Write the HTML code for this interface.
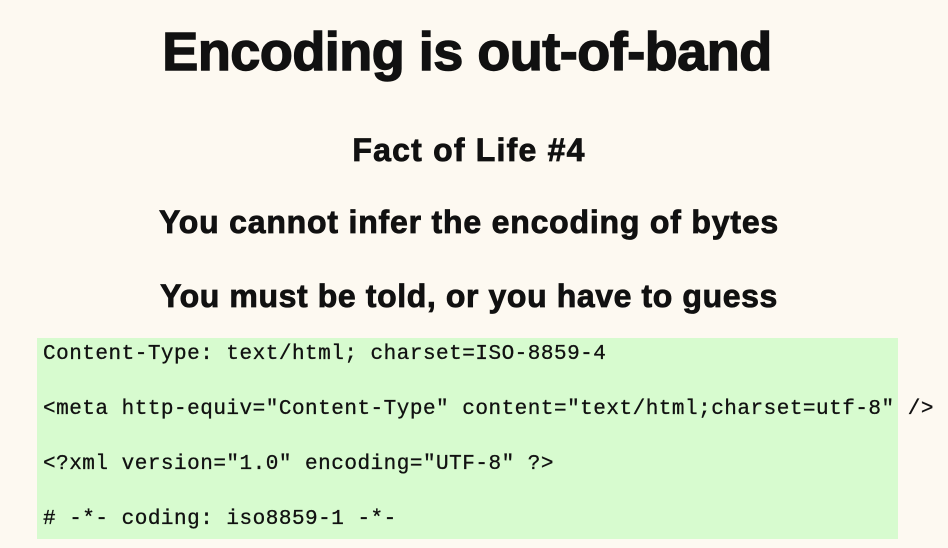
<!DOCTYPE html>
<html><head><meta charset="utf-8"><style>
html,body{margin:0;padding:0;}
body{width:948px;height:548px;background:#fdf9f1;position:relative;overflow:hidden;font-family:"Liberation Sans",sans-serif;color:#111;}
.h{position:absolute;left:-5px;width:948px;text-align:center;font-weight:bold;white-space:nowrap;-webkit-text-stroke:0.8px #111;}
#t{left:-7px;top:22px;font-size:54px;letter-spacing:-0.5px;line-height:60px;-webkit-text-stroke:1.4px #111;}
#a{top:131px;font-size:32px;letter-spacing:1.2px;line-height:38px;}
#b{top:203px;font-size:32px;letter-spacing:0.8px;line-height:38px;}
#c{top:277px;font-size:32px;letter-spacing:0.6px;line-height:38px;}
#box{position:absolute;left:37px;top:338px;width:861px;height:201px;background:#d7fbcf;}
.m{position:absolute;left:43px;font-family:"Liberation Mono",monospace;font-size:21px;letter-spacing:0.5px;white-space:nowrap;line-height:24px;color:#111;-webkit-text-stroke:0.3px #111;}
</style></head><body>
<div class="h" id="t">Encoding is out-of-band</div>
<div class="h" id="a">Fact of Life #4</div>
<div class="h" id="b">You cannot infer the encoding of bytes</div>
<div class="h" id="c">You must be told, or you have to guess</div>
<div id="box"></div>
<div class="m" style="top:343px">Content-Type: text/html; charset=ISO-8859-4</div>
<div class="m" style="top:398px">&lt;meta http-equiv="Content-Type" content="text/html;charset=utf-8" /&gt;</div>
<div class="m" style="top:453px">&lt;?xml version="1.0" encoding="UTF-8" ?&gt;</div>
<div class="m" style="top:508px"># -*- coding: iso8859-1 -*-</div>
</body></html>
